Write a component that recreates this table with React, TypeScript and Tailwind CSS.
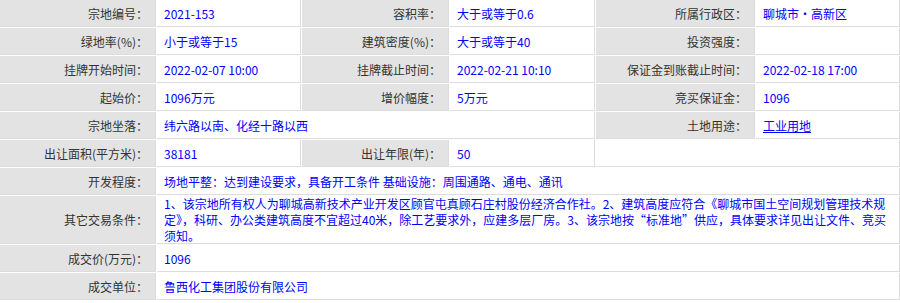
import React from "react";

const L = ({ children }: { children?: React.ReactNode }) => (
  <div className="h-[27px] bg-[#e3e3e3] border-r border-b border-[#dcdcdc] pr-[7px] text-[#333333] flex items-center justify-end whitespace-nowrap">
    {children}
  </div>
);

const V = ({ children, className = "" }: { children?: React.ReactNode; className?: string }) => (
  <div className={"h-[27px] bg-white border-r border-b border-[#dcdcdc] pl-[7px] text-[#0000ff] flex items-center whitespace-nowrap " + className}>
    {children}
  </div>
);

export default function App() {
  return (
    <div className="w-[900px] h-[303px] bg-white font-['Noto_Sans_CJK_SC',sans-serif] text-[12px] leading-[15px]">
      <div className="grid grid-cols-[156px_144px_147px_145px_159px_144px] gap-px bg-white">
        <L>宗地编号：</L>
        <V>2021-153</V>
        <L>容积率：</L>
        <V>大于或等于0.6</V>
        <L>所属行政区：</L>
        <V>聊城市・高新区</V>

        <L>绿地率(%)：</L>
        <V>小于或等于15</V>
        <L>建筑密度(%)：</L>
        <V>大于或等于40</V>
        <L>投资强度：</L>
        <V></V>

        <L>挂牌开始时间：</L>
        <V>2022-02-07 10:00</V>
        <L>挂牌截止时间：</L>
        <V>2022-02-21 10:10</V>
        <L>保证金到账截止时间：</L>
        <V>2022-02-18 17:00</V>

        <L>起始价：</L>
        <V>1096万元</V>
        <L>增价幅度：</L>
        <V>5万元</V>
        <L>竞买保证金：</L>
        <V>1096</V>

        <L>宗地坐落：</L>
        <V className="col-span-3">纬六路以南、化经十路以西</V>
        <L>土地用途：</L>
        <V>
          <span className="underline">工业用地</span>
        </V>

        <L>出让面积(平方米)：</L>
        <V>38181</V>
        <L>出让年限(年)：</L>
        <V>50</V>
        <V className="col-span-2"></V>

        <L>开发程度：</L>
        <V className="col-span-5">场地平整：达到建设要求，具备开工条件 基础设施：周围通路、通电、通讯</V>

        <div className="h-[48px] bg-[#e3e3e3] border-r border-b border-[#dcdcdc] pr-[7px] text-[#333333] flex items-center justify-end whitespace-nowrap">
          其它交易条件：
        </div>
        <div className="col-span-5 h-[48px] bg-white border-r border-b border-[#dcdcdc] pl-[7px] text-[#0000ff] flex flex-col justify-center whitespace-nowrap leading-[16px]">
          <span className="block">1、该宗地所有权人为聊城高新技术产业开发区顾官屯真顾石庄村股份经济合作社。2、建筑高度应符合《聊城市国土空间规划管理技术规</span>
          <span className="block">定》，科研、办公类建筑高度不宜超过40米，除工艺要求外，应建多层厂房。3、该宗地按“标准地”供应，具体要求详见出让文件、竞买</span>
          <span className="block">须知。</span>
        </div>

        <L>成交价(万元)：</L>
        <V className="col-span-5">1096</V>

        <L>成交单位：</L>
        <V className="col-span-5">鲁西化工集团股份有限公司</V>
      </div>
    </div>
  );
}
